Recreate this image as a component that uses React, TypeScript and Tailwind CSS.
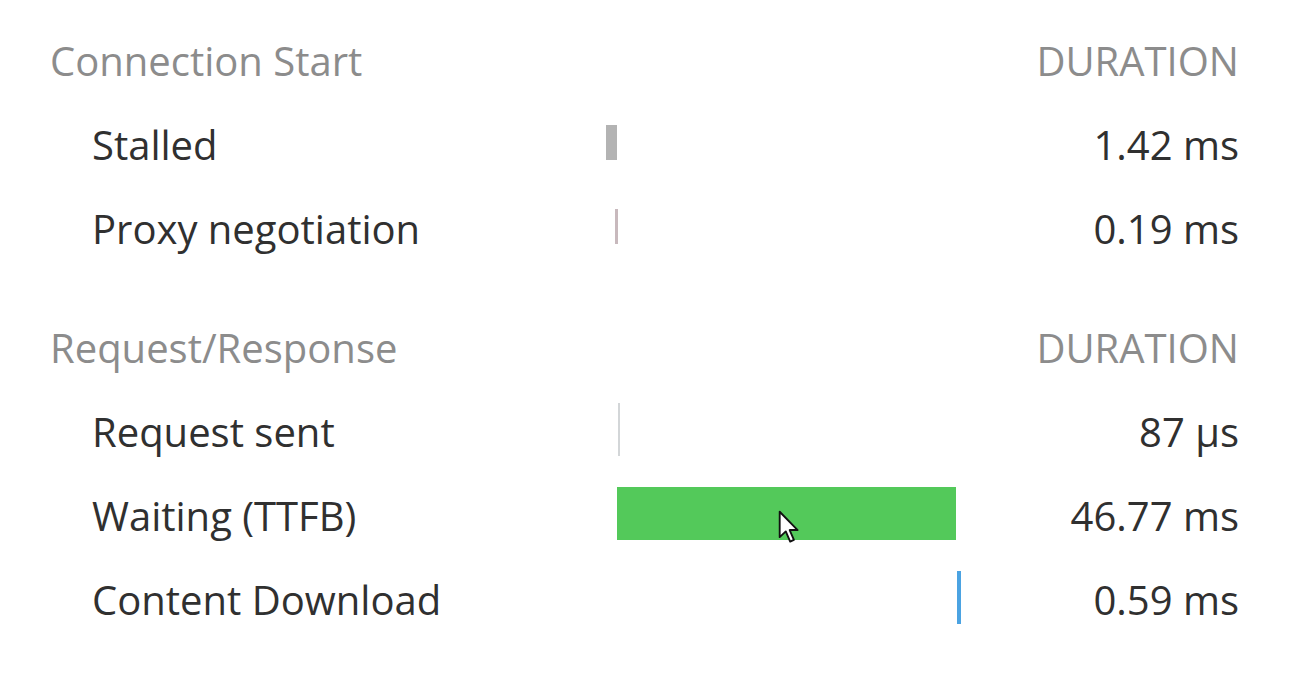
import React from "react";

type Row = {
  label: string;
  duration: string;
  left: number;
  width: number;
  color: string;
  tall?: boolean;
  cursor?: boolean;
};

const sections: { title: string; rows: Row[] }[] = [
  {
    title: "Connection Start",
    rows: [
      { label: "Stalled", duration: "1.42 ms", left: 0, width: 11, color: "bg-[#b3b3b3]" },
      { label: "Proxy negotiation", duration: "0.19 ms", left: 9, width: 3, color: "bg-[#c8b9bd]" },
    ],
  },
  {
    title: "Request/Response",
    rows: [
      { label: "Request sent", duration: "87 µs", left: 12, width: 2, color: "bg-[#d3d6d8]", tall: true },
      { label: "Waiting (TTFB)", duration: "46.77 ms", left: 11, width: 339, color: "bg-[#53c95a]", tall: true, cursor: true },
      { label: "Content Download", duration: "0.59 ms", left: 351, width: 4, color: "bg-[#4ba3e2]", tall: true },
    ],
  },
];

function Cursor() {
  return (
    <svg
      className="absolute left-[172px] top-[39px] h-[34px] w-[22px]"
      viewBox="0 0 13 20"
      aria-hidden="true"
    >
      <path
        d="M1 1 L1 16 L4.6 12.6 L7.2 18.6 L9.4 17.6 L6.9 11.8 L11.6 11.8 Z"
        fill="#ffffff"
        stroke="#111111"
        strokeWidth="1.1"
        strokeLinejoin="round"
      />
    </svg>
  );
}

function TimingRow({ row }: { row: Row }) {
  return (
    <div className="flex h-[84px] items-center">
      <div className="w-[556px] pl-[42px] pt-[6px] text-[#303030]">{row.label}</div>
      <div className="relative flex h-full w-[356px] items-center">
        <div
          className={`${row.color} ${row.tall ? "h-[53px]" : "h-[35px]"}`}
          style={{ marginLeft: row.left, width: row.width }}
        />
        {row.cursor && <Cursor />}
      </div>
      <div className="flex-1 pt-[6px] text-right text-[#303030]">{row.duration}</div>
    </div>
  );
}

export default function App() {
  return (
    <div className="h-[674px] w-[1296px] overflow-hidden bg-white pt-[16px] pl-[50px] pr-[57px] font-['Open_Sans','Noto_Sans',sans-serif] text-[40px] leading-none">
      <div className="flex flex-col gap-[35px]">
        {sections.map((section) => (
          <div key={section.title}>
            <div className="flex h-[84px] items-center justify-between pt-[6px] text-[#8c8c8c]">
              <span>{section.title}</span>
              <span>DURATION</span>
            </div>
            {section.rows.map((row) => (
              <TimingRow key={row.label} row={row} />
            ))}
          </div>
        ))}
      </div>
    </div>
  );
}
